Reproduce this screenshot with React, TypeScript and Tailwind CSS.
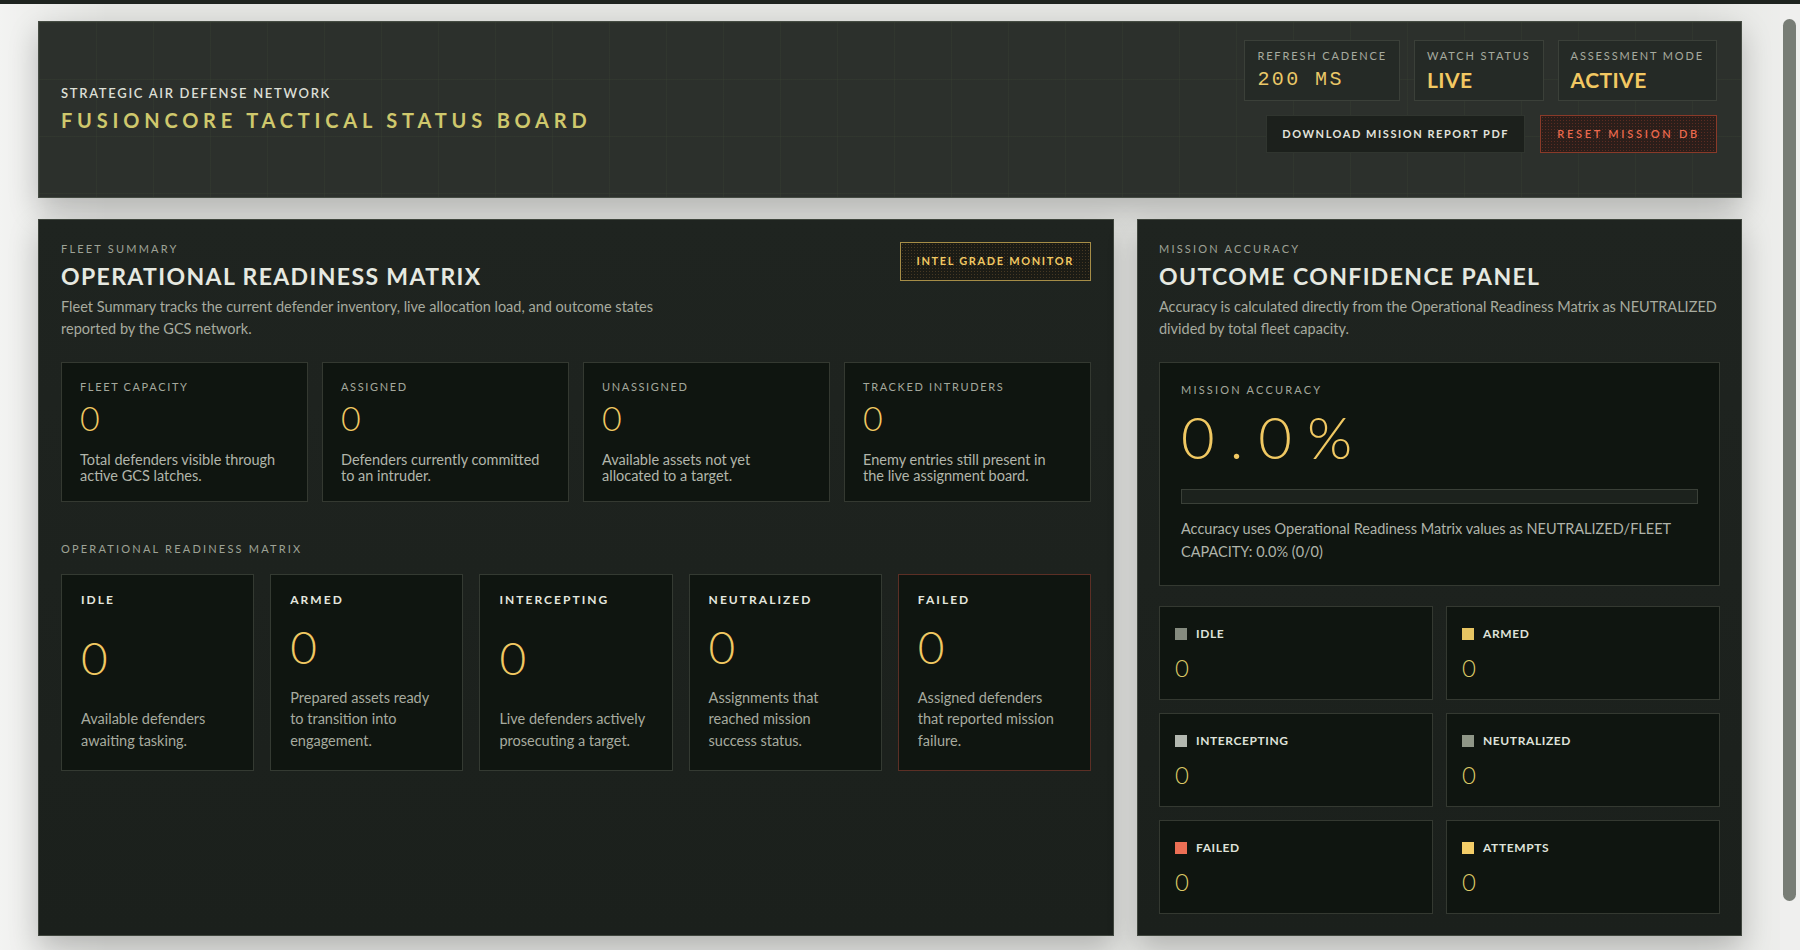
import React from "react";

const fleetCards = [
    { label: "FLEET CAPACITY", value: 0, note: "Total defenders visible through active GCS latches." },
    { label: "ASSIGNED", value: 0, note: "Defenders currently committed to an intruder." },
    { label: "UNASSIGNED", value: 0, note: "Available assets not yet allocated to a target." },
    { label: "TRACKED INTRUDERS", value: 0, note: "Enemy entries still present in the live assignment board." },
];

const matrixCards = [
    { label: "IDLE", value: 0, note: "Available defenders awaiting tasking.", failed: false },
    { label: "ARMED", value: 0, note: "Prepared assets ready to transition into engagement.", failed: false },
    { label: "INTERCEPTING", value: 0, note: "Live defenders actively prosecuting a target.", failed: false },
    { label: "NEUTRALIZED", value: 0, note: "Assignments that reached mission success status.", failed: false },
    { label: "FAILED", value: 0, note: "Assigned defenders that reported mission failure.", failed: true },
];

const legend = [
    { label: "IDLE", value: 0, swatch: "bg-[#858b7f]" },
    { label: "ARMED", value: 0, swatch: "bg-[#e6c462]" },
    { label: "INTERCEPTING", value: 0, swatch: "bg-[#b3b8b0]" },
    { label: "NEUTRALIZED", value: 0, swatch: "bg-[#8f9687]" },
    { label: "FAILED", value: 0, swatch: "bg-[#ec6f55]" },
    { label: "ATTEMPTS", value: 0, swatch: "bg-[#f3cd68]" },
];

const HeaderStat = ({ label, value, mono }: { label: string; value: string; mono?: boolean }) => (
    <div className="h-[61px] px-3 pt-[8px] border border-[#3b4039] bg-[#252a26]">
        <div className="text-[11px] leading-[14px] tracking-[0.17em] text-[#a7ab9f]">{label}</div>
        {mono ? (
            <div className="mt-[4px] font-['Liberation_Mono',monospace] text-[20px] leading-[26px] tracking-[0.12em] text-[#ebc868]">{value}</div>
        ) : (
            <div className="mt-[3px] text-[21px] leading-[27px] font-bold tracking-[0.02em] text-[#f2c862]">{value}</div>
        )}
    </div>
);

export default function App() {
    const accuracy = 0;

    return (
        <div className="min-h-screen w-full bg-[#e4e5e2] font-['Lato','Open_Sans',sans-serif] bg-[linear-gradient(90deg,rgba(255,255,255,0.55),rgba(255,255,255,0)_6%,rgba(255,255,255,0)_94%,rgba(255,255,255,0.4))]">
            <div className="h-[4px] w-full bg-[#1e231f]" />
            <div className="flex">
                <main className="flex-1 min-w-0 px-[38px] pt-[17px] pb-4">
                    {/* Header */}
                    <header className="h-[177px] flex items-center justify-between pl-[22px] pr-6 border border-[#454b43] bg-[#2c302c] bg-[linear-gradient(rgba(110,130,80,0.07)_1px,transparent_1px),linear-gradient(90deg,rgba(110,130,80,0.07)_1px,transparent_1px)] bg-[size:57px_57px] shadow-[0_12px_28px_rgba(0,0,0,0.22)]">
                        <div className="mb-[2px]">
                            <div className="text-[13px] leading-[16px] font-semibold tracking-[0.13em] text-[#dcdfd6]">STRATEGIC AIR DEFENSE NETWORK</div>
                            <h1 className="mt-[7px] text-[20px] leading-[25px] font-bold tracking-[0.24em] text-[#cfc86c]">FUSIONCORE TACTICAL STATUS BOARD</h1>
                        </div>
                        <div className="self-start mt-[18px] flex flex-col items-end gap-[14px]">
                            <div className="flex gap-[14px]">
                                <HeaderStat label="REFRESH CADENCE" value="200 MS" mono />
                                <HeaderStat label="WATCH STATUS" value="LIVE" />
                                <HeaderStat label="ASSESSMENT MODE" value="ACTIVE" />
                            </div>
                            <div className="flex gap-[15px]">
                                <button className="h-[38px] px-[15px] bg-[#1c201c] border border-[#30352f] text-[11px] font-bold tracking-[0.14em] text-[#e2e3dc]">
                                    DOWNLOAD MISSION REPORT PDF
                                </button>
                                <button className="h-[38px] px-4 border border-[#8a3a29] bg-[#2b1e1a] bg-[radial-gradient(rgba(180,70,50,0.35)_0.6px,transparent_0.8px)] bg-[size:3px_3px] text-[11px] font-semibold tracking-[0.25em] text-[#ec6a4e]">
                                    RESET MISSION DB
                                </button>
                            </div>
                        </div>
                    </header>

                    <div className="mt-[21px] grid grid-cols-[1076fr_605fr] gap-[23px]">
                        {/* Fleet summary panel */}
                        <section className="border border-[#40463e] bg-[#1c211d] bg-[linear-gradient(180deg,#1f2420,#1b201c)] p-[22px] shadow-[0_12px_28px_rgba(0,0,0,0.22)]">
                            <div className="flex items-start justify-between">
                                <div>
                                    <div className="text-[11px] leading-[14px] tracking-[0.2em] text-[#9ea296]">FLEET SUMMARY</div>
                                    <h2 className="mt-[5px] text-[23px] leading-[30px] font-bold tracking-[0.06em] text-[#e6e9e1]">OPERATIONAL READINESS MATRIX</h2>
                                    <p className="mt-[5px] max-w-[620px] text-[14.5px] leading-[21.5px] text-[#a7ab9f]">
                                        Fleet Summary tracks the current defender inventory, live allocation load, and outcome states reported by the GCS network.
                                    </p>
                                </div>
                                <div className="h-[39px] px-4 flex items-center border border-[#a68d47] bg-[#1b1b15] bg-[radial-gradient(rgba(150,110,60,0.35)_0.6px,transparent_0.8px)] bg-[size:3px_3px] text-[11px] font-bold tracking-[0.15em] text-[#f0c862]">
                                    INTEL GRADE MONITOR
                                </div>
                            </div>

                            <div className="mt-[23px] grid grid-cols-4 gap-[14px]">
                                {fleetCards.map((c) => (
                                    <div key={c.label} className="h-[140px] border border-[#343931] bg-[#0f1510] pt-[17px] px-[18px]">
                                        <div className="text-[11px] leading-[14px] tracking-[0.15em] text-[#a4a89c]">{c.label}</div>
                                        <div className="mt-[6px] text-[34px] leading-[36px] font-light text-[#f0c862]">{c.value}</div>
                                        <p className="mt-[16px] pr-[6px] text-[14.5px] leading-[16px] text-[#b2b6ab]">{c.note}</p>
                                    </div>
                                ))}
                            </div>

                            <div className="mt-[40px] text-[11px] leading-[14px] tracking-[0.2em] text-[#9ea296]">OPERATIONAL READINESS MATRIX</div>
                            <div className="mt-[18px] grid grid-cols-5 gap-4">
                                {matrixCards.map((c) => (
                                    <div
                                        key={c.label}
                                        className={`min-h-[197px] flex flex-col justify-between pt-[17px] pb-[19px] px-[19px] bg-[#0f1510] border ${c.failed ? "border-[#5c2f25]" : "border-[#343a32]"}`}
                                    >
                                        <div className="text-[12px] leading-[16px] font-bold tracking-[0.17em] text-[#e4e7df]">{c.label}</div>
                                        <div className="text-[46px] leading-[48px] font-light text-[#f0c862]">{c.value}</div>
                                        <p className="text-[14.5px] leading-[21.5px] text-[#a7ab9f]">{c.note}</p>
                                    </div>
                                ))}
                            </div>
                        </section>

                        {/* Accuracy panel */}
                        <section className="border border-[#40463e] bg-[#1c211d] bg-[linear-gradient(180deg,#1f2420,#1b201c)] pt-[22px] px-[21px] pb-[21px] shadow-[0_12px_28px_rgba(0,0,0,0.22)]">
                            <div className="text-[11px] leading-[14px] tracking-[0.2em] text-[#9ea296]">MISSION ACCURACY</div>
                            <h2 className="mt-[5px] text-[23px] leading-[30px] font-bold tracking-[0.06em] text-[#e6e9e1]">OUTCOME CONFIDENCE PANEL</h2>
                            <p className="mt-[5px] text-[14.5px] leading-[21.5px] text-[#a7ab9f]">
                                Accuracy is calculated directly from the Operational Readiness Matrix as NEUTRALIZED divided by total fleet capacity.
                            </p>

                            <div className="mt-[23px] border border-[#343931] bg-[#0f1510] pt-[20px] pb-[22px] px-[21px]">
                                <div className="text-[11px] leading-[14px] tracking-[0.2em] text-[#a4a89c]">MISSION ACCURACY</div>
                                <div className="mt-[10px] text-[58px] leading-[60px] font-light tracking-[0.26em] text-[#f0c862]">{accuracy.toFixed(1)}%</div>
                                <div className="mt-[22px] h-[15px] border border-[#3a4038] bg-[#1c221d]">
                                    <div className="h-full bg-[#e6c462]" style={{ width: `${accuracy}%` }} />
                                </div>
                                <p className="mt-[14px] text-[14.5px] leading-[22.5px] text-[#b0b4aa]">
                                    Accuracy uses Operational Readiness Matrix values as NEUTRALIZED/FLEET CAPACITY: 0.0% (0/0)
                                </p>
                            </div>

                            <div className="mt-[20px] grid grid-cols-2 gap-[13px]">
                                {legend.map((l) => (
                                    <div key={l.label} className="h-[94px] border border-[#343931] bg-[#0f1510] pt-[19px] px-[15px]">
                                        <div className="flex items-center gap-[9px]">
                                            <span className={`w-[12px] h-[12px] ${l.swatch}`} />
                                            <span className="text-[12px] leading-[16px] font-bold tracking-[0.05em] text-[#dfe2da]">{l.label}</span>
                                        </div>
                                        <div className="mt-[12px] text-[24px] leading-[28px] font-light text-[#dcc966]">{l.value}</div>
                                    </div>
                                ))}
                            </div>
                        </section>
                    </div>
                </main>

                {/* page scrollbar */}
                <div className="w-5 shrink-0 bg-[#efefee] pt-[15px] pl-[3px]">
                    <div className="w-[13px] h-[882px] rounded-full bg-[#787d76]" />
                </div>
            </div>
        </div>
    );
}
